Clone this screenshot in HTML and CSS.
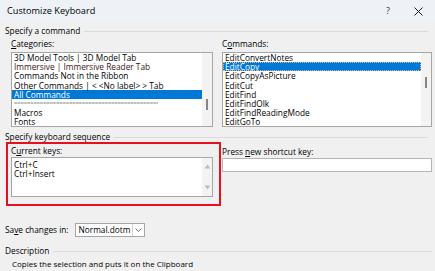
FILE: index.html
```html
<!DOCTYPE html>
<html>
    <head>
        <meta charset="utf-8">
        <title>Customize Keyboard</title>
        <link rel="stylesheet" href="styles.css">
    </head>
    <body>
        <div class="titlebar">
            <span class="title">Customize Keyboard</span>
            <span class="help">?</span>
            <span class="close">
                <svg width="9" height="9" viewBox="0 0 9 9"><path d="M0.5 0.5L8.5 8.5M8.5 0.5L0.5 8.5" stroke="#1b1b1b" stroke-width="1"/></svg>
            </span>
        </div>
        <div class="content">
            <div class="group">Specify a command</div>
            <div class="pair">
                <div class="field">
                    <div class="label"><u>C</u>ategories:</div>
                    <div class="listbox">
                        <ul class="items">
                            <li>3D Model Tools | 3D Model Tab</li>
                            <li class="tinted">Immersive | Immersive Reader Tab</li>
                            <li>Commands Not in the Ribbon</li>
                            <li>Other Commands | &lt; &lt;No label&gt; &gt; Tab</li>
                            <li class="selected">All Commands</li>
                            <li class="divider">=============================================</li>
                            <li>Macros</li>
                            <li>Fonts</li>
                        </ul>
                        <div class="scroll"><div class="thumb thumb-categories"></div></div>
                    </div>
                </div>
                <div class="field">
                    <div class="label">C<u>o</u>mmands:</div>
                    <div class="listbox">
                        <ul class="items">
                            <li>EditConvertNotes</li>
                            <li class="selected focused">EditCopy</li>
                            <li>EditCopyAsPicture</li>
                            <li>EditCut</li>
                            <li>EditFind</li>
                            <li>EditFindOlk</li>
                            <li>EditFindReadingMode</li>
                            <li>EditGoTo</li>
                        </ul>
                        <div class="scroll"><div class="thumb thumb-commands"></div></div>
                    </div>
                </div>
            </div>

            <div class="group group-keys">Specify keyboard sequence</div>
            <div class="pair pair-keys">
                <div class="highlight">
                    <div class="label">C<u>u</u>rrent keys:</div>
                    <div class="keybox">
                        <ul class="items keys">
                            <li>Ctrl+C</li>
                            <li>Ctrl+Insert</li>
                        </ul>
                        <div class="arrows">
                            <svg width="7" height="5" viewBox="0 0 7 5"><path d="M3.5 0.5L6.5 4.5H0.5Z" fill="#bcbcbc"/></svg>
                            <svg width="7" height="5" viewBox="0 0 7 5"><path d="M0.5 0.5H6.5L3.5 4.5Z" fill="#bcbcbc"/></svg>
                        </div>
                    </div>
                </div>
                <div class="field field-new">
                    <div class="label">Press <u>n</u>ew shortcut key:</div>
                    <div class="input"></div>
                </div>
            </div>

            <div class="save">
                <span>Sa<u>v</u>e changes in:</span>
                <div class="select">
                    <span class="select-value">Normal.dotm</span>
                    <span class="select-arrow">
                        <svg width="7" height="4" viewBox="0 0 7 4"><path d="M0.5 0.5L3.5 3.5L6.5 0.5" fill="none" stroke="#666" stroke-width="0.9"/></svg>
                    </span>
                </div>
            </div>

            <div class="group group-desc">Description</div>
            <p class="description">Copies the selection and puts it on the Clipboard</p>
        </div>
    </body>
</html>
```

FILE: styles.css
```css
* {
    box-sizing: border-box;
}
body {
    margin: 0;
    width: 435px;
    height: 271px;
    overflow: hidden;
    background: #f0f0f0;
    color: #000;
    font-family: "Open Sans", "Noto Sans", sans-serif;
    font-size: 8.3px;
    line-height: 10px;
}
u {
    text-decoration-thickness: 1px;
    text-underline-offset: 1px;
}
.titlebar {
    height: 21px;
    background: #eef2f7;
    display: flex;
    align-items: center;
    padding: 1px 0 0 7px;
}
.title {
    flex: 1;
    font-size: 9.2px;
}
.help {
    width: 30px;
    margin-left: 2px;
    text-align: center;
    font-size: 9px;
    color: #333;
}
.close {
    width: 30px;
    display: flex;
    justify-content: center;
    margin-right: 2px;
}
.content {
    padding: 5px 3px 0 5px;
}
.group {
    display: flex;
    align-items: center;
    gap: 4px;
    height: 10px;
}
.group::after {
    content: "";
    flex: 1;
    border-top: 1px solid #dadada;
    margin-right: 4px;
}
.pair {
    display: grid;
    grid-template-columns: 202px 210px;
    gap: 9px;
    margin: 3px 0 0 6px;
}
.label {
    height: 10px;
    margin-bottom: 3px;
}
.listbox {
    display: flex;
    height: 75px;
    background: #fff;
    border: 1px solid #a6a6a6;
}
.items {
    flex: 1;
    list-style: none;
    margin: 0;
    padding: 0;
    overflow: hidden;
}
.items li {
    height: 9.2px;
    line-height: 9.2px;
    padding-left: 2px;
    white-space: nowrap;
}
.items .tinted {
    color: #3a1414;
}
.items .selected {
    background: #0078d7;
    color: #fff;
}
.items .focused {
    outline: 1px dotted #e8b488;
    outline-offset: -1px;
}
.items .divider {
    color: #8a8a8a;
    font-size: 6px;
    letter-spacing: -0.2px;
    overflow: hidden;
    width: 146px;
}
.scroll {
    width: 10px;
    background: #f3f3f3;
    display: flex;
    justify-content: center;
}
.thumb {
    width: 2px;
    height: 11px;
    background: #858585;
}
.thumb-categories {
    margin-top: 46px;
}
.thumb-commands {
    margin-top: 24px;
}
.group-keys {
    margin-top: 5px;
}
.pair-keys {
    grid-template-columns: 215px 1fr;
    gap: 1px;
    margin: 0 0 0 1px;
}
.highlight {
    border: 2px solid #e8101c;
    padding: 2px 6px 7px 3px;
}
.label + .keybox {
    margin-top: -2px;
}
.keybox {
    display: flex;
    height: 40px;
    background: #fff;
    border: 1px solid #a6a6a6;
}
.keys {
    padding-top: 2px;
}
.arrows {
    width: 10px;
    background: #f3f3f3;
    display: flex;
    flex-direction: column;
    justify-content: space-between;
    align-items: center;
    padding: 6px 0 6px;
}
.field-new {
    padding-top: 5px;
}
.input {
    height: 14px;
    background: #fff;
    border: 1px solid #b4b4b4;
    margin-top: -2px;
}
.save {
    display: flex;
    align-items: center;
    gap: 6px;
    margin-top: 17px;
    height: 14px;
}
.select {
    display: flex;
    width: 70px;
    height: 14px;
    background: #fff;
    border: 1px solid #a6a6a6;
}
.select-value {
    flex: 1;
    padding-left: 3px;
    line-height: 12px;
}
.select-arrow {
    width: 12px;
    border-left: 1px solid #d6d6d6;
    display: flex;
    align-items: center;
    justify-content: center;
}
.group-desc {
    margin-top: 9px;
}
.group-desc::after {
    margin-right: 0;
}
.description {
    margin: 3px 0 0 7px;
    font-size: 8px;
}
```
